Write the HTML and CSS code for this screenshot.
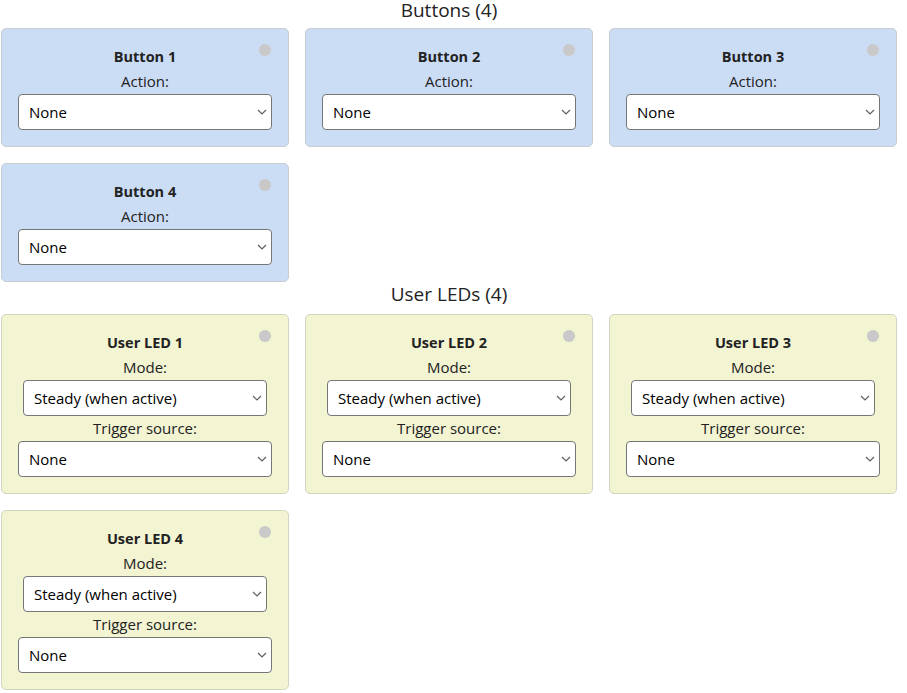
FILE: index.html
```html
<!DOCTYPE html>
<html>
<head>
<meta charset="utf-8">
<link rel="stylesheet" href="styles.css">
</head>
<body>
<main class="page">
  <section class="section">
    <h2 class="section-title">Buttons (4)</h2>
    <div class="grid">
      <div class="card card-button"><span class="dot"></span>
        <div class="card-title">Button 1</div>
        <div class="label">Action:</div>
        <div class="select-wrap"><select class="sel"><option>None</option></select><svg class="chev" width="10" height="6" viewBox="0 0 10 6"><path d="M1 1 L5 5 L9 1" fill="none" stroke="#5f5f5f" stroke-width="1.2"/></svg></div>
      </div>
      <div class="card card-button"><span class="dot"></span>
        <div class="card-title">Button 2</div>
        <div class="label">Action:</div>
        <div class="select-wrap"><select class="sel"><option>None</option></select><svg class="chev" width="10" height="6" viewBox="0 0 10 6"><path d="M1 1 L5 5 L9 1" fill="none" stroke="#5f5f5f" stroke-width="1.2"/></svg></div>
      </div>
      <div class="card card-button"><span class="dot"></span>
        <div class="card-title">Button 3</div>
        <div class="label">Action:</div>
        <div class="select-wrap"><select class="sel"><option>None</option></select><svg class="chev" width="10" height="6" viewBox="0 0 10 6"><path d="M1 1 L5 5 L9 1" fill="none" stroke="#5f5f5f" stroke-width="1.2"/></svg></div>
      </div>
      <div class="card card-button"><span class="dot"></span>
        <div class="card-title">Button 4</div>
        <div class="label">Action:</div>
        <div class="select-wrap"><select class="sel"><option>None</option></select><svg class="chev" width="10" height="6" viewBox="0 0 10 6"><path d="M1 1 L5 5 L9 1" fill="none" stroke="#5f5f5f" stroke-width="1.2"/></svg></div>
      </div>
    </div>
  </section>
  <section class="section section-leds">
    <h2 class="section-title">User LEDs (4)</h2>
    <div class="grid">
      <div class="card card-led"><span class="dot"></span>
        <div class="card-title">User LED 1</div>
        <div class="label">Mode:</div>
        <div class="select-wrap narrow"><select class="sel"><option>Steady (when active)</option></select><svg class="chev" width="10" height="6" viewBox="0 0 10 6"><path d="M1 1 L5 5 L9 1" fill="none" stroke="#5f5f5f" stroke-width="1.2"/></svg></div>
        <div class="label">Trigger source:</div>
        <div class="select-wrap"><select class="sel"><option>None</option></select><svg class="chev" width="10" height="6" viewBox="0 0 10 6"><path d="M1 1 L5 5 L9 1" fill="none" stroke="#5f5f5f" stroke-width="1.2"/></svg></div>
      </div>
      <div class="card card-led"><span class="dot"></span>
        <div class="card-title">User LED 2</div>
        <div class="label">Mode:</div>
        <div class="select-wrap narrow"><select class="sel"><option>Steady (when active)</option></select><svg class="chev" width="10" height="6" viewBox="0 0 10 6"><path d="M1 1 L5 5 L9 1" fill="none" stroke="#5f5f5f" stroke-width="1.2"/></svg></div>
        <div class="label">Trigger source:</div>
        <div class="select-wrap"><select class="sel"><option>None</option></select><svg class="chev" width="10" height="6" viewBox="0 0 10 6"><path d="M1 1 L5 5 L9 1" fill="none" stroke="#5f5f5f" stroke-width="1.2"/></svg></div>
      </div>
      <div class="card card-led"><span class="dot"></span>
        <div class="card-title">User LED 3</div>
        <div class="label">Mode:</div>
        <div class="select-wrap narrow"><select class="sel"><option>Steady (when active)</option></select><svg class="chev" width="10" height="6" viewBox="0 0 10 6"><path d="M1 1 L5 5 L9 1" fill="none" stroke="#5f5f5f" stroke-width="1.2"/></svg></div>
        <div class="label">Trigger source:</div>
        <div class="select-wrap"><select class="sel"><option>None</option></select><svg class="chev" width="10" height="6" viewBox="0 0 10 6"><path d="M1 1 L5 5 L9 1" fill="none" stroke="#5f5f5f" stroke-width="1.2"/></svg></div>
      </div>
      <div class="card card-led"><span class="dot"></span>
        <div class="card-title">User LED 4</div>
        <div class="label">Mode:</div>
        <div class="select-wrap narrow"><select class="sel"><option>Steady (when active)</option></select><svg class="chev" width="10" height="6" viewBox="0 0 10 6"><path d="M1 1 L5 5 L9 1" fill="none" stroke="#5f5f5f" stroke-width="1.2"/></svg></div>
        <div class="label">Trigger source:</div>
        <div class="select-wrap"><select class="sel"><option>None</option></select><svg class="chev" width="10" height="6" viewBox="0 0 10 6"><path d="M1 1 L5 5 L9 1" fill="none" stroke="#5f5f5f" stroke-width="1.2"/></svg></div>
      </div>
    </div>
  </section>
</main>
</body>
</html>
```

FILE: styles.css
```css
* { box-sizing: border-box; }
html, body { margin: 0; padding: 0; background: #ffffff; }
body {
  font-family: "Open Sans", "Noto Sans", sans-serif;
  color: #212529;
}
.page {
  width: 896px;
  margin-left: 1px;
  padding-top: 0;
}
.section-title {
  margin: 0 0 8px 0;
  font-size: 19px;
  line-height: 20px;
  font-weight: 400;
  text-align: center;
  color: #222;
}
.section-leds { margin-top: 2px; }
.section-leds .section-title { margin-bottom: 10px; }
.grid {
  display: grid;
  grid-template-columns: repeat(3, 288px);
  gap: 16px;
}
.card {
  position: relative;
  border: 1px solid #c9cdd2;
  border-radius: 5px;
  padding: 16px;
  display: flex;
  flex-direction: column;
  align-items: center;
  text-align: center;
}
.card-button { background: #cbdcf5; }
.card-led { background: #f2f4d2; border-color: #d2d5c0; }
.dot {
  position: absolute;
  top: 15px;
  right: 17px;
  width: 12px;
  height: 12px;
  border-radius: 50%;
  background: #c9c9c9;
}
.card-title {
  font-weight: 700;
  font-size: 14.5px;
  line-height: 24px;
  color: #222;
}
.label {
  font-size: 15px;
  line-height: 24px;
  color: #222;
}
.select-wrap {
  position: relative;
  width: 254px;
  height: 36px;
  margin-top: 1px;
}
.select-wrap.narrow { width: 244px; }
.sel {
  appearance: none;
  -webkit-appearance: none;
  display: block;
  width: 100%;
  height: 36px;
  margin: 0;
  padding: 0 24px 0 10px;
  font-family: "Open Sans", "Noto Sans", sans-serif;
  font-size: 15px;
  color: #000;
  background: #ffffff;
  border: 1px solid #767676;
  border-radius: 4px;
}
.chev {
  position: absolute;
  right: 5px;
  top: 15px;
  pointer-events: none;
}
```
